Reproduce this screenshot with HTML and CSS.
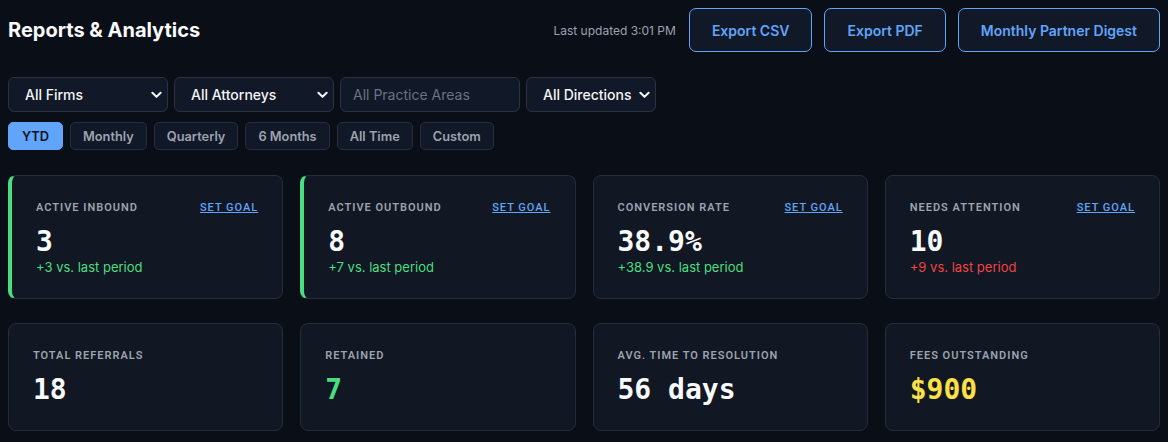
FILE: index.html
```html
<!DOCTYPE html>
<html lang="en">
<head>
    <meta charset="UTF-8">
    <meta name="viewport" content="width=device-width, initial-scale=1.0">
    <title>Reports &amp; Analytics</title>
    <link rel="stylesheet" href="styles.css">
</head>
<body>
    <header class="page-header">
        <h1>Reports &amp; Analytics</h1>
        <div class="header-actions">
            <span class="updated">Last updated 3:01 PM</span>
            <button class="outline-btn">Export CSV</button>
            <button class="outline-btn">Export PDF</button>
            <button class="outline-btn">Monthly Partner Digest</button>
        </div>
    </header>

    <div class="filters">
        <select class="filter-select w-160">
            <option>All Firms</option>
        </select>
        <select class="filter-select w-160">
            <option>All Attorneys</option>
        </select>
        <input class="filter-input" type="text" placeholder="All Practice Areas">
        <select class="filter-select w-130">
            <option>All Directions</option>
        </select>
    </div>

    <div class="periods">
        <button class="period active">YTD</button>
        <button class="period">Monthly</button>
        <button class="period">Quarterly</button>
        <button class="period">6 Months</button>
        <button class="period">All Time</button>
        <button class="period">Custom</button>
    </div>

    <!-- Goal-tracked metrics -->
    <section class="stat-grid">
        <div class="stat-card accent">
            <div class="stat-top">
                <span class="stat-label">Active Inbound</span>
                <a href="#" class="goal-link">Set Goal</a>
            </div>
            <div class="stat-value">3</div>
            <div class="stat-delta up">+3 vs. last period</div>
        </div>
        <div class="stat-card accent">
            <div class="stat-top">
                <span class="stat-label">Active Outbound</span>
                <a href="#" class="goal-link">Set Goal</a>
            </div>
            <div class="stat-value">8</div>
            <div class="stat-delta up">+7 vs. last period</div>
        </div>
        <div class="stat-card">
            <div class="stat-top">
                <span class="stat-label">Conversion Rate</span>
                <a href="#" class="goal-link">Set Goal</a>
            </div>
            <div class="stat-value">38.9%</div>
            <div class="stat-delta up">+38.9 vs. last period</div>
        </div>
        <div class="stat-card">
            <div class="stat-top">
                <span class="stat-label">Needs Attention</span>
                <a href="#" class="goal-link">Set Goal</a>
            </div>
            <div class="stat-value">10</div>
            <div class="stat-delta down">+9 vs. last period</div>
        </div>
    </section>

    <!-- Totals -->
    <section class="stat-grid">
        <div class="stat-card">
            <div class="stat-top">
                <span class="stat-label">Total Referrals</span>
            </div>
            <div class="stat-value">18</div>
        </div>
        <div class="stat-card">
            <div class="stat-top">
                <span class="stat-label">Retained</span>
            </div>
            <div class="stat-value green">7</div>
        </div>
        <div class="stat-card">
            <div class="stat-top">
                <span class="stat-label">Avg. Time to Resolution</span>
            </div>
            <div class="stat-value">56 days</div>
        </div>
        <div class="stat-card">
            <div class="stat-top">
                <span class="stat-label">Fees Outstanding</span>
            </div>
            <div class="stat-value yellow">$900</div>
        </div>
    </section>
</body>
</html>
```

FILE: styles.css
```css
* {
    margin: 0;
    padding: 0;
    box-sizing: border-box;
    font-family: Inter, Roboto, 'Helvetica Neue', sans-serif;
}

body {
    background: #0a0e17;
    color: #f3f4f6;
    padding: 8px;
    overflow: hidden;
}

/* Header */
.page-header {
    display: flex;
    justify-content: space-between;
    align-items: center;
    margin-bottom: 25px;
}

h1 {
    font-size: 20px;
    font-weight: 700;
    color: #f9fafb;
}

.header-actions {
    display: flex;
    align-items: center;
    gap: 12px;
}

.updated {
    font-size: 12px;
    color: #9ca3af;
    margin-right: 1px;
}

.outline-btn {
    height: 44px;
    padding: 0 22px;
    background: #111827;
    border: 1px solid #60a5fa;
    border-radius: 7px;
    color: #60a5fa;
    font-size: 14px;
    font-weight: 600;
    cursor: pointer;
}

/* Filters */
.filters {
    display: flex;
    gap: 6px;
    margin-bottom: 10px;
}

.filter-select,
.filter-input {
    height: 35px;
    background-color: #111827;
    border: 1px solid #2a3240;
    border-radius: 6px;
    color: #f3f4f6;
    font-size: 14px;
    font-weight: 500;
    padding: 0 16px;
    outline: none;
}

.filter-select {
    appearance: none;
    -webkit-appearance: none;
    background-image: url("data:image/svg+xml,%3Csvg xmlns='http://www.w3.org/2000/svg' width='12' height='8' viewBox='0 0 12 8'%3E%3Cpath d='M1.5 1.5 6 6l4.5-4.5' fill='none' stroke='%23f3f4f6' stroke-width='2.2' stroke-linecap='round' stroke-linejoin='round'/%3E%3C/svg%3E");
    background-repeat: no-repeat;
    background-position: right 5px center;
    background-size: 11px 8px;
}

.w-160 {
    width: 160px;
}

.w-130 {
    width: 130px;
}

.filter-input {
    width: 180px;
    padding: 0 12px;
    font-weight: 400;
}

.filter-input::placeholder {
    color: #6b7280;
}

/* Period tabs */
.periods {
    display: flex;
    gap: 7px;
    margin-bottom: 25px;
}

.period {
    height: 28px;
    padding: 0 12px;
    background: #111827;
    border: 1px solid #262e3b;
    border-radius: 5px;
    color: #9ca3af;
    font-size: 12.8px;
    font-weight: 600;
    cursor: pointer;
}

.period.active {
    background: #60a5fa;
    border-color: #60a5fa;
    color: #0b1220;
    padding: 0 13px;
}

/* Stat cards */
.stat-grid {
    display: grid;
    grid-template-columns: repeat(4, 1fr);
    gap: 17px;
    margin-bottom: 24px;
}

.stat-grid:last-child {
    margin-bottom: 0;
}

.stat-card {
    background: #111723;
    border: 1px solid #262d3a;
    border-radius: 8px;
    padding: 25px 24px 23px;
}

.stat-card.accent {
    border-left: 4px solid #4ade80;
    padding-left: 24px;
}

.stat-top {
    display: flex;
    justify-content: space-between;
    align-items: center;
    margin-bottom: 10px;
}

.stat-label {
    font-family: Roboto, Inter, sans-serif;
    font-size: 11px;
    font-weight: 600;
    letter-spacing: 0.09em;
    text-transform: uppercase;
    color: #9ca3af;
}

.goal-link {
    font-family: Roboto, Inter, sans-serif;
    font-size: 11px;
    font-weight: 500;
    letter-spacing: 0.09em;
    text-transform: uppercase;
    color: #60a5fa;
    text-decoration: underline;
}

.stat-value {
    font-family: 'DejaVu Sans Mono', monospace;
    font-size: 28px;
    font-weight: 700;
    line-height: 35px;
    color: #f9fafb;
}

.stat-value.green {
    color: #4ade80;
}

.stat-value.yellow {
    color: #fde047;
}

.stat-delta {
    font-size: 13px;
    line-height: 16px;
}

.stat-delta.up {
    color: #4ade80;
}

.stat-delta.down {
    color: #ef4444;
}
```
